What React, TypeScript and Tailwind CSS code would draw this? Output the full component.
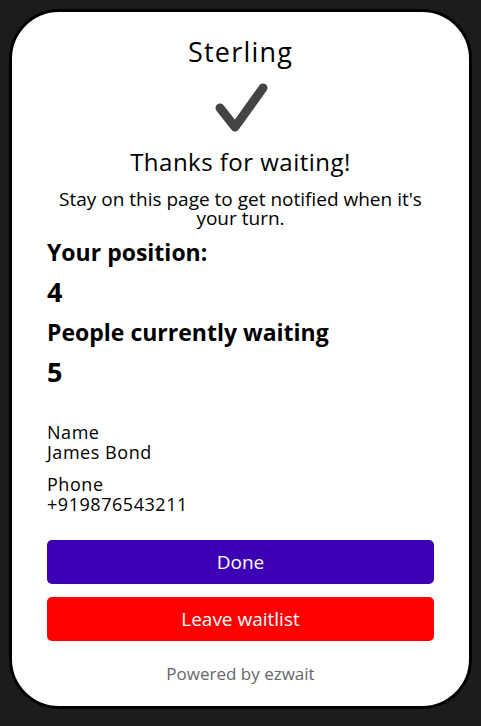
import React from 'react';

const font = { fontFamily: '"Open Sans", "Noto Sans", sans-serif' };

const App: React.FC = () => {
  return (
    <div className="min-h-[726px] w-[481px] bg-[#1c1c1c] pt-[9px] pb-[14px] px-[9px]" style={font}>
      <div className="bg-white border-[3px] border-black rounded-[50px] px-[35px] pt-[23px] pb-[22px] text-black">
        <h1 className="text-center text-[27px] leading-[34px] tracking-[0.045em]">Sterling</h1>
        <div className="flex justify-center mt-[13px]">
          <svg width="54" height="52" viewBox="0 0 54 52" fill="none">
            <path d="M6 26 L21 45 L49 6" stroke="#444" strokeWidth="9" strokeLinecap="round" strokeLinejoin="round" />
          </svg>
        </div>
        <p className="text-center text-[24px] leading-[28px] tracking-[0.02em] mt-[14px]">Thanks for waiting!</p>
        <p className="text-center text-[19px] leading-[19px] mt-[14px]">Stay on this page to get notified when it's your turn.</p>

        <h3 className="text-[23px] leading-[28px] font-bold mt-[10px]">Your position:</h3>
        <p className="text-[27px] leading-[30px] font-bold mt-[11px]">4</p>
        <h3 className="text-[23px] leading-[28px] font-bold mt-[11px]">People currently waiting</h3>
        <p className="text-[27px] leading-[30px] font-bold mt-[11px]">5</p>

        <div className="mt-[35px] text-[18px] leading-[20px] tracking-[0.03em]">
          <p>Name</p>
          <p>James Bond</p>
        </div>
        <div className="mt-[12px] text-[18px] leading-[20px] tracking-[0.03em]">
          <p>Phone</p>
          <p>+919876543211</p>
        </div>

        <button className="mt-[26px] w-full h-[44px] rounded-[5px] bg-[#3c00b5] text-white text-[19px]">Done</button>
        <button className="mt-[13px] w-full h-[44px] rounded-[5px] bg-[#ff0000] text-white text-[19px]">Leave waitlist</button>

        <p className="mt-[23px] text-center text-[17px] leading-[20px] text-[#666]">Powered by ezwait</p>
      </div>
    </div>
  );
};

export default App;
